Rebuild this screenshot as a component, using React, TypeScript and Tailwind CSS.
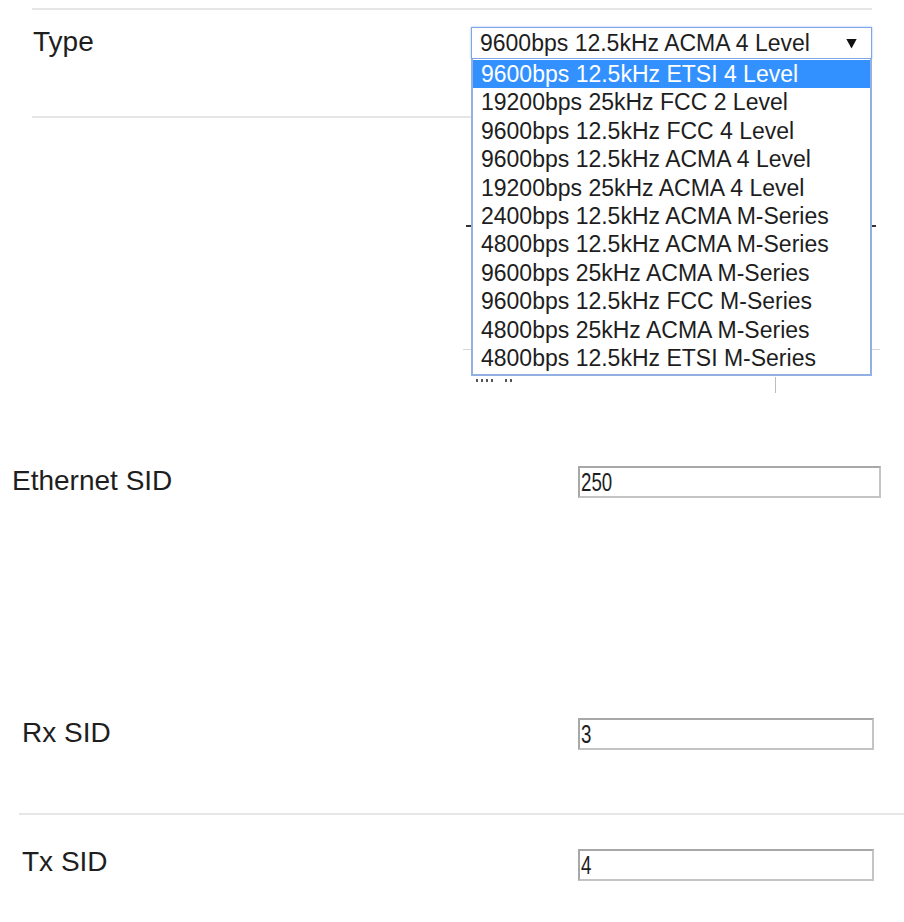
import React from "react";

const options = [
  "9600bps 12.5kHz ETSI 4 Level",
  "19200bps 25kHz FCC 2 Level",
  "9600bps 12.5kHz FCC 4 Level",
  "9600bps 12.5kHz ACMA 4 Level",
  "19200bps 25kHz ACMA 4 Level",
  "2400bps 12.5kHz ACMA M-Series",
  "4800bps 12.5kHz ACMA M-Series",
  "9600bps 25kHz ACMA M-Series",
  "9600bps 12.5kHz FCC M-Series",
  "4800bps 25kHz ACMA M-Series",
  "4800bps 12.5kHz ETSI M-Series",
];

function Field({ label, value, labelPad, width, labelTop }: { label: string; value: string; labelPad: string; width: string; labelTop: string }) {
  return (
    <div className="flex items-start h-[40px]">
      <div className={`w-[578px] shrink-0 ${labelPad} ${labelTop} text-[28px] leading-[32px] text-[#1e1e1e]`}>{label}</div>
      <div className={`mt-[6px] h-[32px] ${width} border-2 border-[#c4c4c4] border-t-[#a8a8a8] border-l-[#a8a8a8] bg-white flex items-center pl-[1px] text-[#1e1e1e]`}>
        <span className="inline-block text-[26px] leading-[28px] scale-x-[0.72] origin-left">{value}</span>
      </div>
    </div>
  );
}

export default function App() {
  return (
    <div className="w-[904px] h-[922px] bg-white overflow-hidden font-['Liberation_Sans',Arial,sans-serif] text-[#1e1e1e]">
      {/* Type section */}
      <div className="h-[118px] pt-[8px] pl-[32px]">
        <div className="w-[840px] h-[110px] border-t-2 border-b-2 border-[#e6e6e6] flex items-start">
          <div className="w-[439px] shrink-0 pl-px pt-[16px] text-[28px] leading-[32px]">Type</div>
          <div className="relative mt-[17px] z-10">
            <div className="w-[401px] h-[32px] border border-[#7fa6e8] shadow-[0_0_2px_#9dbcf0] bg-white flex items-center justify-between pl-[8px] pr-[14px] text-[23px]">
              <span>9600bps 12.5kHz ACMA 4 Level</span>
              <svg width="11" height="11" viewBox="0 0 10 10">
                <path d="M0.3 0.8 L9.7 0.8 L5 9.6 Z" fill="#111" />
              </svg>
            </div>
            <div className="absolute left-0 top-[32px] w-[401px] h-[317px] border-2 border-t-0 border-[#93b0e3] bg-white pt-[1px]">
              {options.map((o, i) => (
                <div
                  key={o}
                  className={`h-[28.4px] leading-[28.4px] pl-[8px] text-[23px] whitespace-nowrap ${i === 0 ? "bg-[#3391ff] text-white" : "text-[#1e1e1e]"}`}
                >
                  {o}
                </div>
              ))}
            </div>
          </div>
        </div>
      </div>

      {/* Content hidden behind the open list */}
      <div className="h-[342px] pl-[466px] pt-[107px]">
        <div className="w-[410px] h-[124px] border-t-2 border-[#333]" />
        <div className="w-[417px] -ml-[3px] h-[28px] border-t border-[#d6d6d6]" />
        <div className="w-[410px] h-[16px] flex">
          <div className="w-[309px] pl-[10px] pt-[2px] flex gap-[3px] items-start">
            <div className="w-[2px] h-[3px] bg-[#555]" />
            <div className="w-[2px] h-[3px] bg-[#555]" />
            <div className="w-[2px] h-[3px] bg-[#555]" />
            <div className="w-[2px] h-[3px] bg-[#555]" />
            <div className="w-[6px]" />
            <div className="w-[2px] h-[3px] bg-[#555]" />
            <div className="w-[2px] h-[3px] bg-[#555]" />
          </div>
          <div className="border-l border-[#bdbdbd] h-[16px]" />
        </div>
      </div>

      <Field label="Ethernet SID" value="250" labelPad="pl-[12px]" labelTop="pt-[5px]" width="w-[303px]" />
      <div className="h-[212px]" />
      <Field label="Rx SID" value="3" labelPad="pl-[22px]" labelTop="pt-[5px]" width="w-[296px]" />
      <div className="h-[61px]" />
      <div className="ml-[19px] border-t-2 border-[#e6e6e6]" />
      <div className="h-[28px]" />
      <Field label="Tx SID" value="4" labelPad="pl-[22px]" labelTop="pt-[3px]" width="w-[296px]" />
    </div>
  );
}
